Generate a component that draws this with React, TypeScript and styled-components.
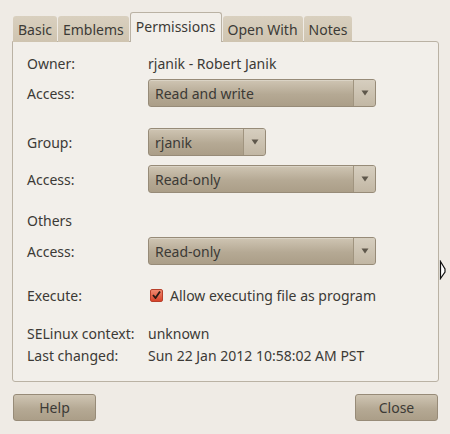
import styled, { createGlobalStyle } from "styled-components";

const GlobalStyle = createGlobalStyle`
  html, body {
    margin: 0;
    padding: 0;
    background: #efebe5;
  }
  body {
    font-family: "Noto Sans", "DejaVu Sans", sans-serif;
    font-size: 14px;
    color: #3c3a36;
  }
`;

const Window = styled.div`
  position: relative;
  width: 450px;
  height: 434px;
  box-sizing: border-box;
  padding: 12px 12px 0 12px;
  background: #efebe5;
  overflow: hidden;
`;

const TabStrip = styled.div`
  display: flex;
  align-items: flex-end;
  height: 30px;
  padding-left: 1px;
  position: relative;
  z-index: 1;
  margin-bottom: -1px;
`;

const Tab = styled.div<{ $active?: boolean }>`
  box-sizing: border-box;
  height: ${(p) => (p.$active ? "30px" : "26px")};
  padding: 0 5px;
  margin-right: 1px;
  display: flex;
  align-items: center;
  border-radius: 3px 3px 0 0;
  background: ${(p) =>
    p.$active ? "#f2efea" : "linear-gradient(#d9d0bf, #cfc4b0)"};
  border: ${(p) => (p.$active ? "1px solid #bab2a4" : "none")};
  border-bottom: none;
  padding-bottom: ${(p) => (p.$active ? "2px" : "0")};
  color: #3c3a36;
`;

const Page = styled.div`
  box-sizing: border-box;
  height: 341px;
  width: 427px;
  border: 1px solid #bab2a4;
  border-radius: 0 3px 3px 3px;
  background: #f2efea;
  padding: 11px 14px 0 14px;
  display: flex;
  flex-direction: column;
`;

const Row = styled.div<{ $gap?: number; $h?: number }>`
  display: grid;
  grid-template-columns: 121px 1fr;
  align-items: center;
  height: ${(p) => p.$h ?? 20}px;
  margin-top: ${(p) => p.$gap ?? 0}px;
`;

const Label = styled.span`
  white-space: nowrap;
`;

const Value = styled.span`
  white-space: nowrap;
`;

const Combo = styled.div<{ $w: number }>`
  box-sizing: border-box;
  width: ${(p) => p.$w}px;
  height: 28px;
  display: flex;
  border: 1px solid #978b78;
  border-radius: 3px;
  background: linear-gradient(#cfc5b3, #b5a994 55%, #ab9e88);
  box-shadow: inset 0 1px 0 rgba(255, 255, 255, 0.25);
  overflow: hidden;
`;

const ComboText = styled.div`
  flex: 1;
  display: flex;
  align-items: center;
  padding-left: 6px;
  color: #3c3a36;
`;

const ComboArrow = styled.div`
  width: 21px;
  display: flex;
  align-items: center;
  justify-content: center;
  border-left: 1px solid #a0947f;
  background: linear-gradient(#d6cebf, #c2b7a4);
`;

const Check = styled.div`
  box-sizing: border-box;
  width: 13px;
  height: 13px;
  margin: 0 7px 0 2px;
  border-radius: 2px;
  border: 1px solid #b8402b;
  background: linear-gradient(#f08a70, #d8432a);
  display: flex;
  align-items: center;
  justify-content: center;
`;

const CheckLine = styled.div`
  display: flex;
  align-items: center;
  white-space: nowrap;
`;

const Buttons = styled.div`
  display: flex;
  justify-content: space-between;
  margin-top: 12px;
  padding-left: 1px;
`;

const Button = styled.div`
  box-sizing: border-box;
  width: 83px;
  height: 27px;
  display: flex;
  align-items: center;
  justify-content: center;
  border: 1px solid #978b78;
  border-radius: 3px;
  background: linear-gradient(#cfc5b3, #b5a994 55%, #ab9e88);
  color: #3c3a36;
`;

const Cursor = styled.svg`
  position: absolute;
  left: 439px;
  top: 260px;
`;

const Arrow = () => (
  <svg width="8" height="6" viewBox="0 0 8 6">
    <path d="M0.5 0.5 H7.5 L4 5.5 Z" fill="#5e574b" />
  </svg>
);

function Select({ text, width }: { text: string; width: number }) {
  return (
    <Combo $w={width}>
      <ComboText>{text}</ComboText>
      <ComboArrow>
        <Arrow />
      </ComboArrow>
    </Combo>
  );
}

export default function App() {
  return (
    <Window>
      <GlobalStyle />
      <TabStrip>
        <Tab>Basic</Tab>
        <Tab>Emblems</Tab>
        <Tab $active>Permissions</Tab>
        <Tab>Open With</Tab>
        <Tab>Notes</Tab>
      </TabStrip>
      <Page>
        <Row>
          <Label>Owner:</Label>
          <Value>rjanik - Robert Janik</Value>
        </Row>
        <Row $gap={6} $h={28}>
          <Label>Access:</Label>
          <Select text="Read and write" width={228} />
        </Row>
        <Row $gap={21} $h={28}>
          <Label>Group:</Label>
          <Select text="rjanik" width={118} />
        </Row>
        <Row $gap={9} $h={28}>
          <Label>Access:</Label>
          <Select text="Read-only" width={228} />
        </Row>
        <Row $gap={17}>
          <Label>Others</Label>
        </Row>
        <Row $gap={7} $h={28}>
          <Label>Access:</Label>
          <Select text="Read-only" width={228} />
        </Row>
        <Row $gap={20}>
          <Label>Execute:</Label>
          <CheckLine>
            <Check>
              <svg width="9" height="8" viewBox="0 0 9 8">
                <path d="M1 4 L3.5 7 L8 0.5" stroke="#2a1a14" strokeWidth="1.8" fill="none" />
              </svg>
            </Check>
            Allow executing file as program
          </CheckLine>
        </Row>
        <Row $gap={18}>
          <Label>SELinux context:</Label>
          <Value>unknown</Value>
        </Row>
        <Row $gap={2}>
          <Label>Last changed:</Label>
          <Value>Sun 22 Jan 2012 10:58:02 AM PST</Value>
        </Row>
      </Page>
      <Buttons>
        <Button>Help</Button>
        <Button>Close</Button>
      </Buttons>
      <Cursor width="8" height="20" viewBox="0 0 8 20">
        <path d="M1.5 1.5 L6 9 V12 L1.5 18.5 Z" stroke="#111" strokeWidth="1.2" fill="#fff" />
      </Cursor>
    </Window>
  );
}
